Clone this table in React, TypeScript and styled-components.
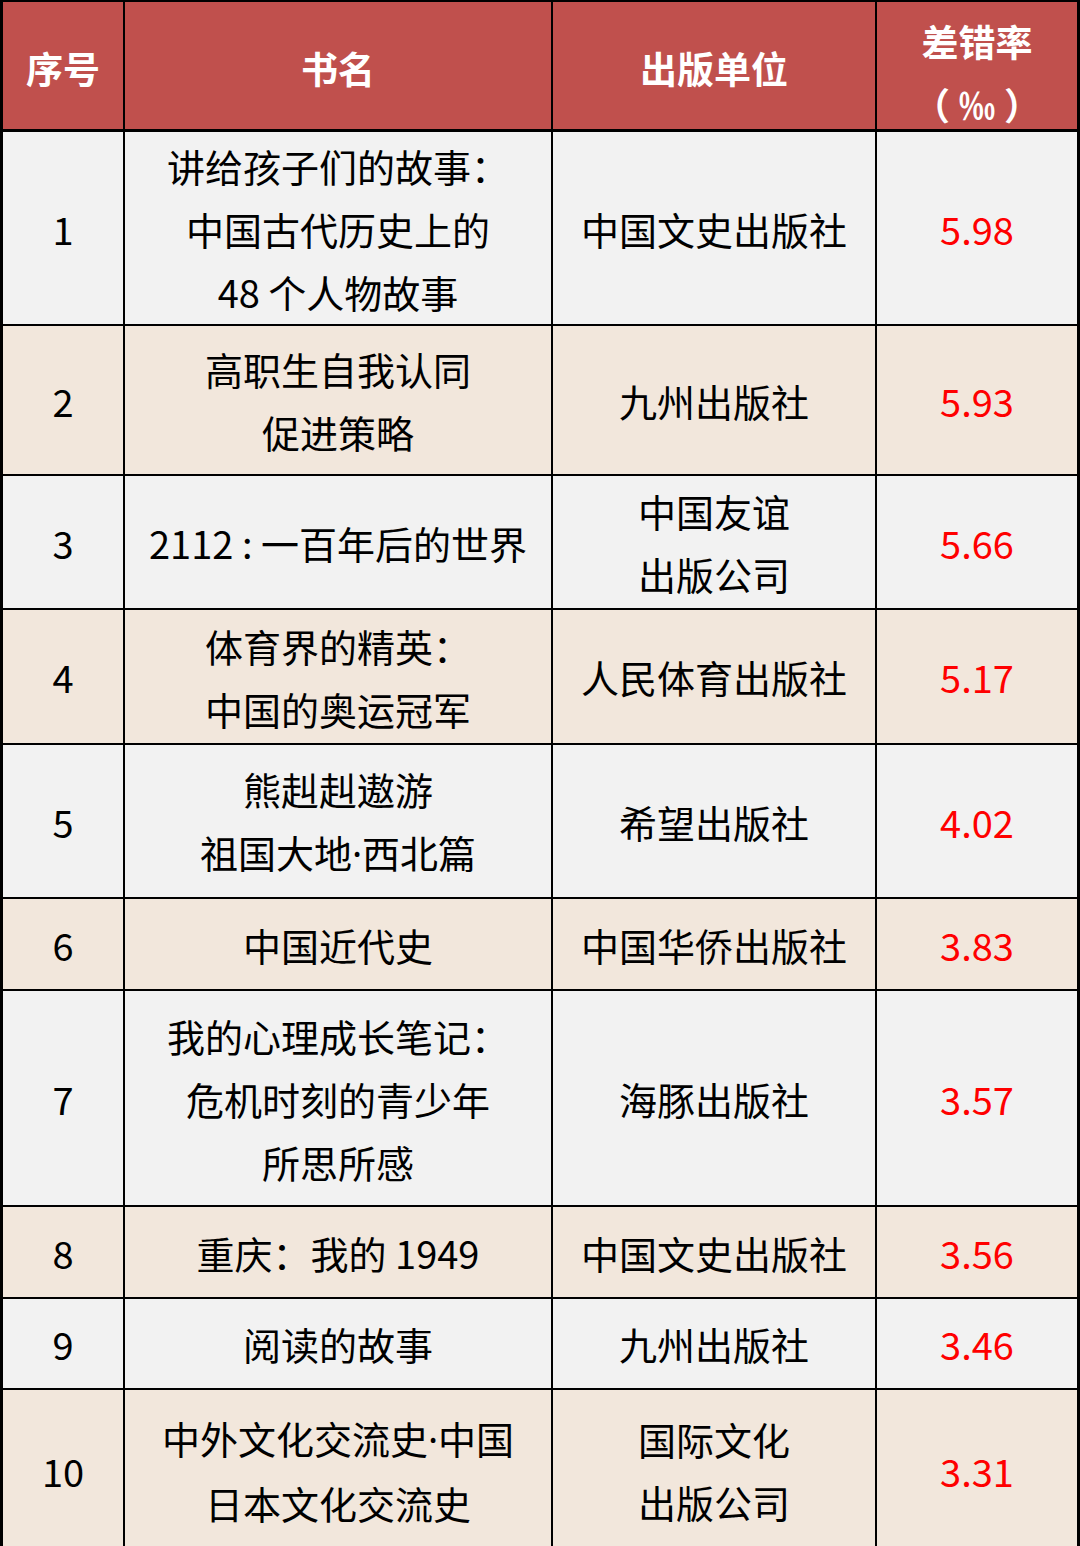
import React from "react";
import styled, { createGlobalStyle } from "styled-components";

type Book = {
  no: string;
  title: string[];
  publisher: string[];
  rate: string;
  height: number;
};

const books: Book[] = [
  { no: "1", title: ["讲给孩子们的故事：", "中国古代历史上的", "48 个人物故事"], publisher: ["中国文史出版社"], rate: "5.98", height: 192 },
  { no: "2", title: ["高职生自我认同", "促进策略"], publisher: ["九州出版社"], rate: "5.93", height: 148 },
  { no: "3", title: ["2112 : 一百年后的世界"], publisher: ["中国友谊", "出版公司"], rate: "5.66", height: 132 },
  { no: "4", title: ["体育界的精英：", "中国的奥运冠军"], publisher: ["人民体育出版社"], rate: "5.17", height: 133 },
  { no: "5", title: ["熊赳赳遨游", "祖国大地·西北篇"], publisher: ["希望出版社"], rate: "4.02", height: 152 },
  { no: "6", title: ["中国近代史"], publisher: ["中国华侨出版社"], rate: "3.83", height: 90 },
  { no: "7", title: ["我的心理成长笔记：", "危机时刻的青少年", "所思所感"], publisher: ["海豚出版社"], rate: "3.57", height: 214 },
  { no: "8", title: ["重庆：我的 1949"], publisher: ["中国文史出版社"], rate: "3.56", height: 90 },
  { no: "9", title: ["阅读的故事"], publisher: ["九州出版社"], rate: "3.46", height: 89 },
  { no: "10", title: ["中外文化交流史·中国", "日本文化交流史"], publisher: ["国际文化", "出版公司"], rate: "3.31", height: 160 },
];

// the narrow middle dot of the source comes from a latin font
function Line({ text }: { text: string }) {
  const parts = text.split("·");
  return (
    <LineText>
      {parts.map((part, i) => (
        <React.Fragment key={i}>
          {i > 0 && <Dot>·</Dot>}
          {part}
        </React.Fragment>
      ))}
    </LineText>
  );
}

function Lines({ items }: { items: string[] }) {
  return (
    <>
      {items.map((line) => (
        <Line key={line} text={line} />
      ))}
    </>
  );
}

export default function App() {
  return (
    <>
      <GlobalStyle />
      <Table>
        <HeaderRow>
          <Cell>序号</Cell>
          <Cell>书名</Cell>
          <Cell>出版单位</Cell>
          <HeadRateCell>
            <Line text="差错率" />
            <Line text="（ ‰ ）" />
          </HeadRateCell>
        </HeaderRow>
        {books.map((book, i) => (
          <Row key={book.no} $alt={i % 2 === 1} $height={book.height}>
            <Cell>{book.no}</Cell>
            <Cell>
              <Lines items={book.title} />
            </Cell>
            <Cell>
              <Lines items={book.publisher} />
            </Cell>
            <RateCell>{book.rate}</RateCell>
          </Row>
        ))}
      </Table>
    </>
  );
}

const GlobalStyle = createGlobalStyle`
  html, body {
    margin: 0;
    padding: 0;
    background: #ffffff;
  }
  body {
    font-family: "Noto Sans CJK SC", "Noto Sans", sans-serif;
  }
`;

const Table = styled.div`
  width: 1080px;
  height: 1546px;
  box-sizing: border-box;
  display: flex;
  flex-direction: column;
  gap: 2px;
  padding: 2px 3px 0 3px;
  background: #000000;
  overflow: hidden;
`;

const Row = styled.div<{ $alt?: boolean; $height: number }>`
  display: grid;
  grid-template-columns: 120px 426px 322px 200px;
  grid-template-rows: minmax(0, 1fr);
  gap: 2px;
  height: ${(p) => p.$height}px;
  flex-shrink: 0;
  font-size: 38px;
  line-height: 63px;
  color: #000000;

  & > div {
    background: ${(p) => (p.$alt ? "#f2e7dc" : "#f2f2f2")};
  }
`;

const HeaderRow = styled(Row).attrs({ $height: 127 })`
  margin-bottom: 1px;
  font-weight: 700;
  color: #ffffff;
  font-size: 37px;

  & > div {
    padding-top: 6px;
    box-sizing: border-box;
    background: #c0504d;
  }
`;

const Cell = styled.div`
  display: flex;
  flex-direction: column;
  align-items: center;
  justify-content: center;
  text-align: center;
  overflow: hidden;
  white-space: nowrap;
`;

const HeadRateCell = styled(Cell)`
  && {
    padding-top: 14px;
  }
`;

const RateCell = styled(Cell)`
  color: #ff0000;
`;

const LineText = styled.span`
  display: block;
`;

const Dot = styled.span`
  font-family: "Noto Sans", sans-serif;
`;
